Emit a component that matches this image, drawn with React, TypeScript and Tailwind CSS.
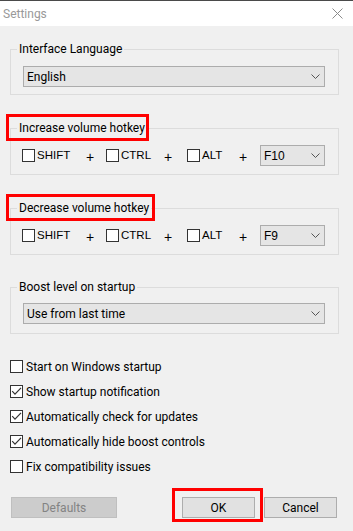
import React from "react";

const FONT = { fontFamily: "Roboto, 'Noto Sans', sans-serif" };
const OLD_FONT = { fontFamily: "'Liberation Sans', Arial, sans-serif" };

const Chevron: React.FC = () => (
  <svg width="9" height="5" viewBox="0 0 9 5" className="shrink-0">
    <path d="M0.5 0.5 L4.5 4.5 L8.5 0.5" stroke="#555" strokeWidth="1" fill="none" />
  </svg>
);

const Select: React.FC<{ value: string; className?: string; old?: boolean }> = ({ value, className = "", old }) => (
  <div
    className={`h-[21px] bg-[#e5e5e5] border border-[#acacac] flex items-center justify-between pl-[3px] pr-[4px] text-[12px] text-black ${className}`}
    style={old ? OLD_FONT : undefined}
  >
    <span>{value}</span>
    <Chevron />
  </div>
);

const Box: React.FC<{ checked?: boolean }> = ({ checked }) => (
  <span className="w-[13px] h-[13px] border border-[#333] bg-white flex items-center justify-center shrink-0">
    {checked && (
      <svg width="11" height="11" viewBox="0 0 11 11">
        <path d="M1.2 5.2 L4 8.2 L10 1.8" stroke="#333" strokeWidth="1.2" fill="none" />
      </svg>
    )}
  </span>
);

const Group: React.FC<{
  label: string;
  redWidth?: number;
  className?: string;
  children: React.ReactNode;
}> = ({ label, redWidth, className = "", children }) => (
  <fieldset className={`mx-[10px] w-[329px] border border-[#dcdcdc] ${className}`}>
    <legend className="relative ml-[6px] px-[2px] text-[12px] leading-[16px] text-black">
      {label}
      {redWidth && (
        <span
          className="absolute -left-[11px] -top-[6px] h-[27px] border-[3px] border-[#ff0000]"
          style={{ width: redWidth }}
        />
      )}
    </legend>
    {children}
  </fieldset>
);

const HotkeyRow: React.FC<{ fkey: string }> = ({ fkey }) => {
  const cell = (name: string, w: string) => (
    <div className={`flex items-center ${w}`}>
      <Box />
      <span className="ml-[2px] text-[11.5px] text-black" style={OLD_FONT}>
        {name}
      </span>
    </div>
  );
  const plus = (w: string) => (
    <span className={`${w} text-[14px] leading-none pt-[3px] text-black`} style={OLD_FONT}>
      +
    </span>
  );
  return (
    <div className="flex items-center ml-[11px] mt-[9px] h-[21px]">
      {cell("SHIFT", "w-[64px]")}
      {plus("w-[20px]")}
      {cell("CTRL", "w-[58px]")}
      {plus("w-[23px]")}
      {cell("ALT", "w-[52px]")}
      {plus("w-[21px]")}
      <Select value={fkey} old className="w-[65px]" />
    </div>
  );
};

const Check: React.FC<{ label: string; checked?: boolean }> = ({ label, checked }) => (
  <div className="h-[25px] flex items-center ml-[10px]">
    <Box checked={checked} />
    <span className="ml-[3px] text-[12px] text-black">{label}</span>
  </div>
);

export default function App() {
  return (
    <div className="w-[353px] h-[531px] bg-[#f0f0f0] overflow-hidden" style={FONT}>
      <div className="border-t border-[#4a4a4a] bg-white h-[26px] flex items-center justify-between pl-[3px] pr-[10px]">
        <span className="text-[12px] text-[#999]">Settings</span>
        <svg width="11" height="11" viewBox="0 0 11 11">
          <path d="M0.5 0.5 L10.5 10.5 M10.5 0.5 L0.5 10.5" stroke="#8a8a8a" strokeWidth="1" />
        </svg>
      </div>

      <Group label="Interface Language" className="mt-[15px] pb-[7px]">
        <Select value="English" className="ml-[12px] mt-[9px] w-[302px]" />
      </Group>

      <Group label="Increase volume hotkey" redWidth={143} className="mt-[25px] pb-[8px]">
        <HotkeyRow fkey="F10" />
      </Group>

      <Group label="Decrease volume hotkey" redWidth={149} className="mt-[25px] pb-[8px]">
        <HotkeyRow fkey="F9" />
      </Group>

      <Group label="Boost level on startup" className="mt-[24px] pb-[9px]">
        <Select value="Use from last time" className="ml-[12px] mt-[8px] w-[302px]" />
      </Group>

      <div className="mt-[20px] flex flex-col">
        <Check label="Start on Windows startup" />
        <Check label="Show startup notification" checked />
        <Check label="Automatically check for updates" checked />
        <Check label="Automatically hide boost controls" checked />
        <Check label="Fix compatibility issues" />
      </div>

      <div className="mt-[18px] flex items-center text-[12px]">
        <button className="ml-[11px] w-[106px] h-[21px] bg-[#cccccc] border border-[#bfbfbf] text-[#838383]">
          Defaults
        </button>
        <button className="relative ml-[65px] w-[73px] h-[21px] bg-[#e1e1e1] border border-[#adadad] text-black">
          OK
          <span className="absolute -left-[11px] -top-[10px] w-[91px] h-[34px] border-[3px] border-[#ff0000]" />
        </button>
        <button className="ml-[9px] w-[73px] h-[21px] bg-[#e1e1e1] border border-[#adadad] text-black">
          Cancel
        </button>
      </div>
    </div>
  );
}
